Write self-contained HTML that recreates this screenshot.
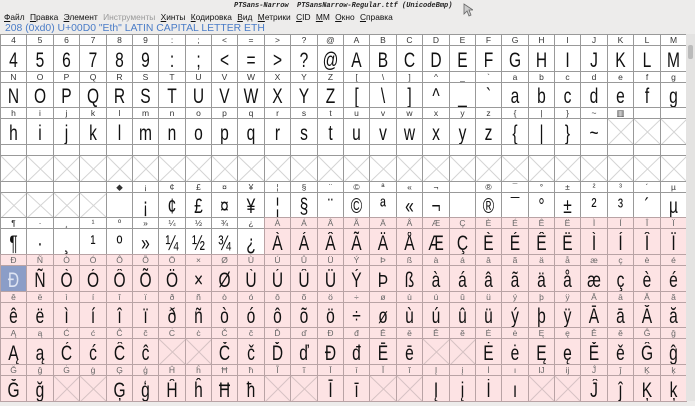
<!DOCTYPE html>
<html><head><meta charset="utf-8"><style>
body{margin:0;width:695px;height:406px;background:#edeceb;overflow:hidden;position:relative;font-family:"Liberation Sans",sans-serif}
#title{position:absolute;left:234px;top:2px;font:bold italic 7px "Liberation Mono",monospace;color:#222;white-space:pre}
#menu{position:absolute;left:4px;top:12px;font-size:8.4px;color:#111;white-space:pre}
#menu span{margin-right:3px}
#menu .d{color:#999}
#info{position:absolute;left:5px;top:23px;font-size:10.4px;color:#4a7cc7}
#grid{position:absolute;left:0;top:34px;width:686px;height:367px;background:#fff}
.c{position:absolute;box-sizing:border-box;text-align:center;overflow:hidden}
.h{font-size:8.5px;line-height:10px;color:#333}
.g{font-family:"Liberation Sans Narrow","Liberation Sans",sans-serif;font-size:21px;color:#111}
.g div{transform:scaleX(0.74)}
#sb{position:absolute;left:686px;top:34px;width:9px;height:367px;background:#e4e3e2}
#th{position:absolute;left:688px;top:45px;width:5px;height:14px;background:#bbb;border-radius:2px}
</style></head><body>
<div id="title">PTSans-Narrow  PTSansNarrow-Regular.ttf (UnicodeBmp)</div>
<svg style="position:absolute;left:463px;top:3px" width="10" height="14"><path d="M1 1 L1 11 L4 8 L6 13 L8 12 L6 7 L10 7 Z" fill="#ccc" stroke="#666" stroke-width="0.8"/></svg>
<div id="menu"><span><u>Ф</u>айл</span> <span><u>П</u>равка</span> <span><u>Э</u>лемент</span> <span class="d">Инструменты</span> <span><u>Х</u>инты</span> <span><u>К</u>одировка</span> <span><u>В</u>ид</span> <span><u>М</u>етрики</span> <span><u>C</u>ID</span> <span><u>М</u>M</span> <span><u>О</u>кно</span> <span><u>С</u>правка</span></div>
<div id="info">208 (0xd0) U+00D0 "Eth" LATIN CAPITAL LETTER ETH</div>
<div id="grid"></div>
<div id="sb"></div><div id="th"></div>
<script>
var g=document.getElementById('grid');
var W=686/26,P=36.65,H=11;
var crossed={};
[0x80,0x81,0x9C,0x9D,0x9E,0x9F,0x7F,0x10A,0x10B,0x114,0x115,0x120,0x121,0x128,0x129,0x12C,0x12D,0x132,0x133].forEach(function(c){crossed[c]=1});
for(var c=0x82;c<=0x9B;c++)crossed[c]=1;
var html='';
for(var r=0;r<10;r++){
 for(var i=0;i<26;i++){
  var cp=0x34+r*26+i;
  var x=Math.round(i*W),x2=Math.round((i+1)*W),y=Math.round(r*P),y2=Math.round((r+1)*P);
  var pink=cp>=0xC0;
  var bg=pink?'#fde3e4':'#fff';
  var lc=pink?'#b9a3a5':'#999';
  var ch=String.fromCharCode(cp);
  var hl=ch; if(cp==0xA0)hl='◆'; if(cp==0x7F)hl='▥'; if(cp>=0x80&&cp<0xA0)hl='';
  html+='<div class="c h" style="left:'+x+'px;top:'+y+'px;width:'+(x2-x+1)+'px;height:'+(H+1)+'px;background:'+bg+';border:1px solid '+lc+';color:'+(pink?'#666':'#333')+'">'+hl+'</div>';
  var gy=y+H,gh=y2-gy;
  var sel=cp==0xD0;
  var inner='';
  if(crossed[cp]){
   inner='<svg width="'+(x2-x)+'" height="'+gh+'" style="position:absolute;left:0;top:0"><path d="M0 0L'+(x2-x)+' '+gh+'M'+(x2-x)+' 0L0 '+gh+'" stroke="'+(pink?'#d6c2c3':'#d4d4d4')+'" stroke-width="1"/></svg>';
  } else if(cp!=0xA0){
   inner='<div style="position:absolute;left:0;right:0;top:1px;line-height:'+(gh+1)+'px;'+(sel?'color:#dde3f2':'')+'">'+ch+'</div>';
  }
  html+='<div class="c g" style="left:'+x+'px;top:'+gy+'px;width:'+(x2-x+1)+'px;height:'+(gh+1)+'px;background:'+(sel?'#8b9dc7':bg)+';border:1px solid '+lc+'">'+inner+'</div>';
 }
}
g.innerHTML=html;
</script>
</body></html>
